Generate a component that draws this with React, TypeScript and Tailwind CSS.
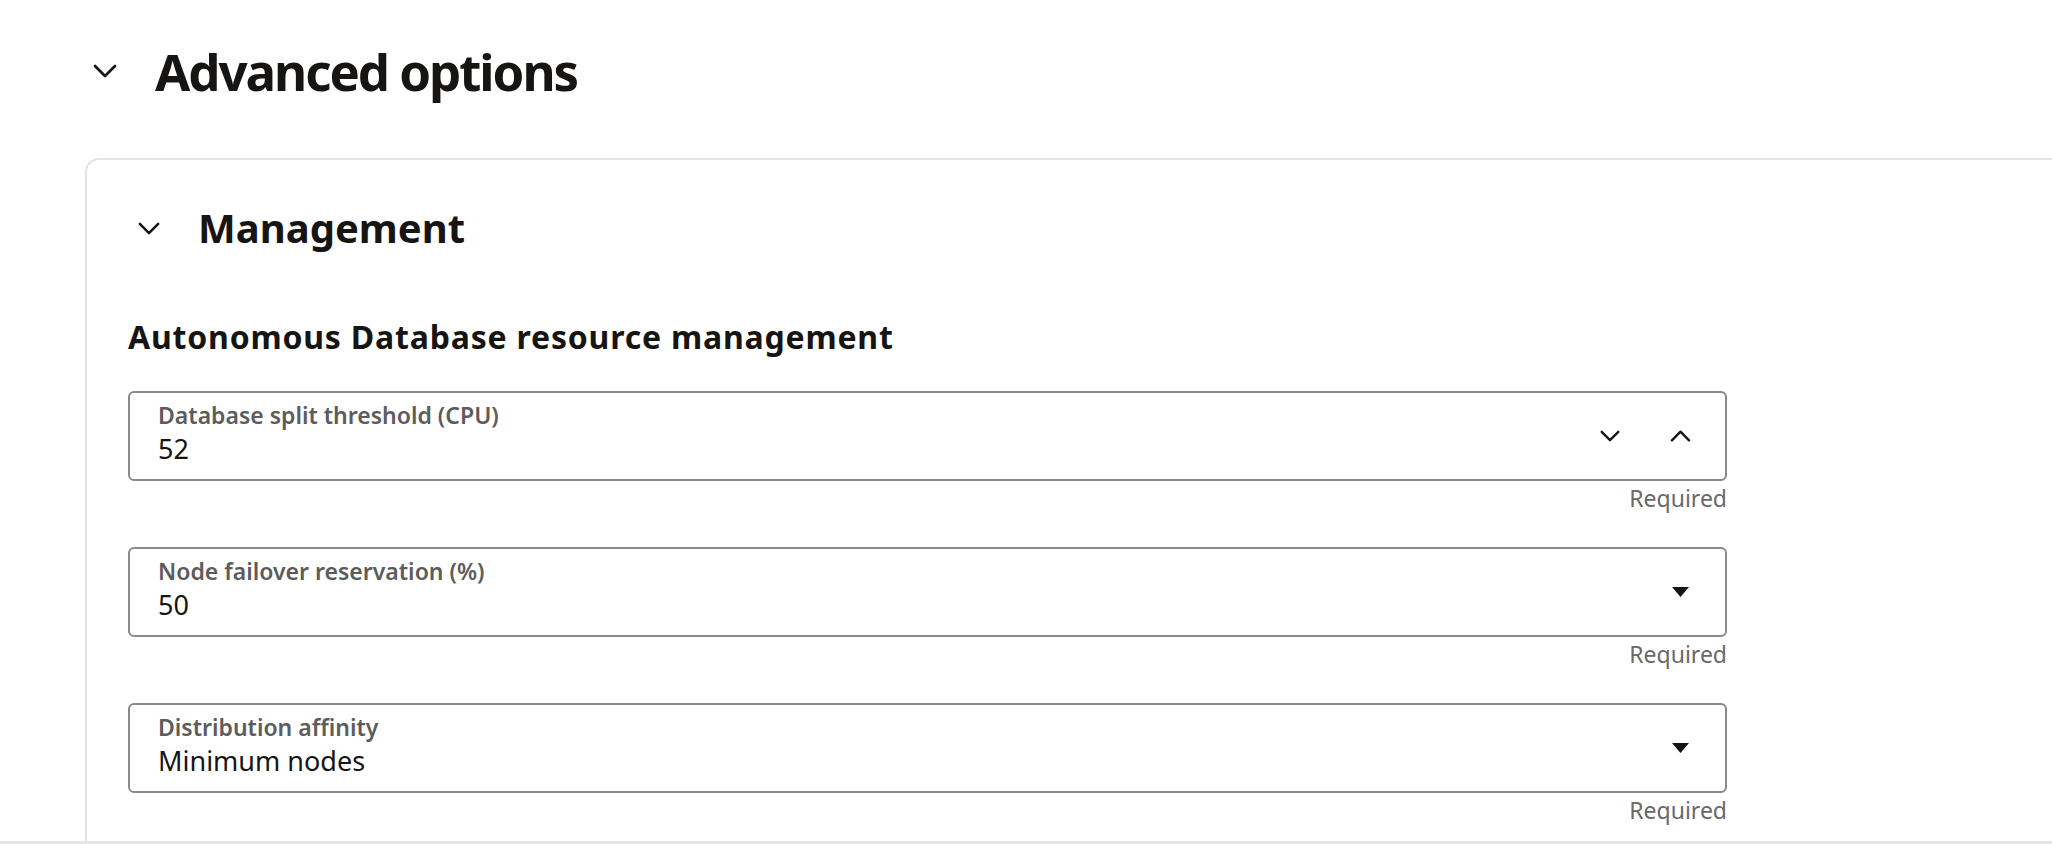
import React from "react";

function Chevron({ className, up }: { className?: string; up?: boolean }) {
  return (
    <svg viewBox="0 0 24 14" className={className} fill="none" stroke="currentColor" strokeWidth={2.8} strokeLinecap="round" strokeLinejoin="round">
      <polyline points={up ? "2,12 12,2 22,12" : "2,2 12,12 22,2"} />
    </svg>
  );
}

function Caret({ className }: { className?: string }) {
  return (
    <svg viewBox="0 0 17 10" className={className} fill="currentColor">
      <polygon points="0,0 17,0 8.5,10" />
    </svg>
  );
}

function Field({ label, value, kind }: { label: string; value: string; kind: "number" | "select" }) {
  return (
    <div className="flex flex-col w-[1599px]">
      <div className="h-[90px] rounded-[6px] border-2 border-[#8a8a8a] flex items-center">
        <div className="flex-1 self-start flex flex-col pl-[28px] pt-[8px]">
          <span className="text-[23px] leading-[28px] font-semibold text-[#5c5c5c]">{label}</span>
          <span className="mt-[5px] text-[27px] leading-[30px] text-[#161513]">{value}</span>
        </div>
        {kind === "number" ? (
          <div className="flex items-center gap-[50px] pr-[34px] text-[#161513]">
            <Chevron className="w-[20px] h-[12px]" />
            <Chevron className="w-[21px] h-[12px]" up />
          </div>
        ) : (
          <div className="flex items-center pr-[36px] text-[#161513]">
            <Caret className="w-[17px] h-[10px]" />
          </div>
        )}
      </div>
      <div className="mt-[4px] text-right text-[23px] leading-[26px] text-[#696969]">Required</div>
    </div>
  );
}

export default function App() {
  return (
    <div className="h-[844px] w-full flex flex-col bg-white overflow-hidden font-['Noto_Sans',sans-serif] text-[#161513]">
      <div className="flex-1 overflow-hidden pt-[41px]">
        <div className="flex items-center h-[60px] pl-[93px] gap-[38px]">
          <Chevron className="w-[24px] h-[14px]" />
          <h1 className="text-[51px] leading-[60px] font-bold tracking-[-0.04em]">Advanced options</h1>
        </div>
        <div className="mt-[57px] ml-[85px] mr-[-20px] border-2 border-r-0 border-b-0 border-[#e4e4e4] rounded-tl-[14px] pt-[44px] pl-[41px] pb-[60px]">
          <div className="flex items-center h-[48px] pl-[10px] gap-[38px]">
            <Chevron className="w-[22px] h-[13px]" />
            <h2 className="text-[40px] leading-[48px] font-bold">Management</h2>
          </div>
          <h3 className="mt-[67px] text-[32px] leading-[36px] font-bold tracking-[0.025em]">Autonomous Database resource management</h3>
          <div className="mt-[36px] flex flex-col gap-[36px]">
            <Field label="Database split threshold (CPU)" value="52" kind="number" />
            <Field label="Node failover reservation (%)" value="50" kind="select" />
            <Field label="Distribution affinity" value="Minimum nodes" kind="select" />
          </div>
        </div>
      </div>
      <div className="h-[3px] bg-[#e6e6e6]" />
    </div>
  );
}
